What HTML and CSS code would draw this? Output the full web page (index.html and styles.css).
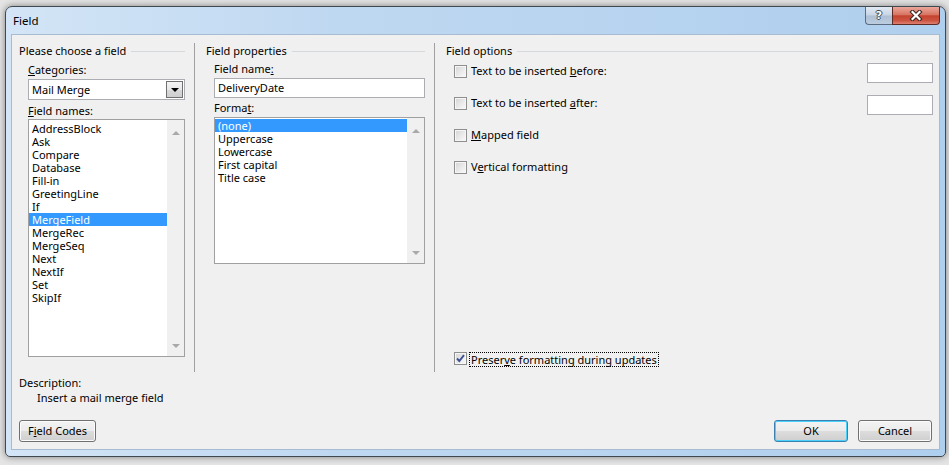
FILE: index.html
```html
<!DOCTYPE html>
<html lang="en">
<head>
<meta charset="utf-8">
<title>Field</title>
<link rel="stylesheet" href="styles.css">
</head>
<body>
<div class="desktop">
  <div class="window">
    <div class="titlebar">
      <span class="title">Field</span>
      <div class="caption">
        <div class="cap-btn help"><span>?</span></div>
        <div class="cap-btn close">
          <svg width="14" height="11" viewBox="0 0 14 11">
            <path d="M3.5 2 L10.5 9 M10.5 2 L3.5 9" stroke="#3a2622" stroke-width="4.2" stroke-linecap="square" fill="none"/>
            <path d="M3.5 2 L10.5 9 M10.5 2 L3.5 9" stroke="#ffffff" stroke-width="2.2" stroke-linecap="square" fill="none"/>
          </svg>
        </div>
      </div>
    </div>
    <div class="client">
      <div class="panels">
        <section class="panel p1">
          <div class="group-head"><span>Please choose a field</span></div>
          <div class="field-label"><u>C</u>ategories:</div>
          <div class="combo">
            <span class="combo-text">Mail Merge</span>
            <span class="drop"><i></i></span>
          </div>
          <div class="field-label"><u>F</u>ield names:</div>
          <div class="listbox lb-names">
            <ul class="items">
              <li>AddressBlock</li>
              <li>Ask</li>
              <li>Compare</li>
              <li>Database</li>
              <li>Fill-in</li>
              <li>GreetingLine</li>
              <li>If</li>
              <li class="sel">MergeField</li>
              <li>MergeRec</li>
              <li>MergeSeq</li>
              <li>Next</li>
              <li>NextIf</li>
              <li>Set</li>
              <li>SkipIf</li>
            </ul>
            <div class="vscroll"><i class="arr up"></i><i class="arr down"></i></div>
          </div>
        </section>
        <section class="panel p2">
          <div class="group-head"><span>Field properties</span></div>
          <div class="field-label">Field name<u>:</u></div>
          <div class="textbox wide">DeliveryDate</div>
          <div class="field-label">Forma<u>t</u>:</div>
          <div class="listbox lb-format">
            <ul class="items">
              <li class="sel">(none)</li>
              <li>Uppercase</li>
              <li>Lowercase</li>
              <li>First capital</li>
              <li>Title case</li>
            </ul>
            <div class="vscroll"><i class="arr up"></i><i class="arr down"></i></div>
          </div>
        </section>
        <section class="panel p3">
          <div class="group-head"><span>Field options</span></div>
          <div class="opt-rows">
            <div class="opt-row">
              <span class="check"></span>
              <span class="opt-label">Text to be inserted <u>b</u>efore:</span>
              <span class="textbox small"></span>
            </div>
            <div class="opt-row">
              <span class="check"></span>
              <span class="opt-label">Text to be inserted <u>a</u>fter:</span>
              <span class="textbox small"></span>
            </div>
            <div class="opt-row">
              <span class="check"></span>
              <span class="opt-label"><u>M</u>apped field</span>
            </div>
            <div class="opt-row">
              <span class="check"></span>
              <span class="opt-label">V<u>e</u>rtical formatting</span>
            </div>
          </div>
          <div class="opt-row preserve">
            <span class="check checked">
              <svg width="11" height="11" viewBox="0 0 11 11"><path d="M2 5.5 L4.3 8 L9 2.2" stroke="#3d4f95" stroke-width="1.9" fill="none"/></svg>
            </span>
            <span class="opt-label focus">Preser<u>v</u>e formatting during updates</span>
          </div>
        </section>
      </div>
      <div class="desc">
        <div>Description:</div>
        <div class="desc-text">Insert a mail merge field</div>
      </div>
      <div class="footer">
        <button class="btn codes">F<u>i</u>eld Codes</button>
        <button class="btn ok default">OK</button>
        <button class="btn cancel">Cancel</button>
      </div>
    </div>
  </div>
</div>
</body>
</html>
```

FILE: styles.css
```css
* { box-sizing: border-box; }
html, body { margin: 0; padding: 0; }
body {
  width: 949px;
  height: 465px;
  overflow: hidden;
  background: #e4e4e4;
  font-family: "Noto Sans", "Open Sans", "DejaVu Sans", sans-serif;
  font-size: 11px;
  color: #000;
}
u { text-decoration: underline; text-underline-offset: 1px; }

.desktop {
  height: 465px;
  padding: 6px 0 0 5px;
}

.window {
  width: 941px;
  height: 451px;
  border: 1px solid #404850;
  border-radius: 7px 7px 5px 5px;
  padding: 0 6px 7px 6px;
  background: linear-gradient(90deg, #d3e5f6 0%, #bfd8f1 35%, #afcfee 100%);
  box-shadow: 0 0 7px rgba(0, 0, 0, 0.45);
  display: flex;
  flex-direction: column;
}

/* title bar */
.titlebar {
  height: 28px;
  display: flex;
  align-items: flex-start;
}
.title {
  padding: 6px 0 0 1px;
  line-height: 15px;
  font-size: 11.5px;
}
.caption {
  margin-left: auto;
  margin-right: -1px;
  display: flex;
}
.cap-btn {
  height: 18px;
  display: flex;
  align-items: center;
  justify-content: center;
}
.cap-btn.help {
  width: 27px;
  border: 1px solid #5b6b80;
  border-top: none;
  border-right: none;
  border-radius: 0 0 0 4px;
  background: linear-gradient(#e2eaf4 0%, #c8d5e4 48%, #aebfd3 52%, #bccde0 100%);
}
.cap-btn.help span {
  font-family: "DejaVu Sans", sans-serif;
  font-weight: bold;
  font-size: 11px;
  line-height: 14px;
  color: #fff;
  text-shadow: 1px 0 0 #3e4a58, -1px 0 0 #3e4a58, 0 1px 0 #3e4a58, 0 -1px 0 #3e4a58;
}
.cap-btn.close {
  width: 48px;
  border: 1px solid #5e2a24;
  border-top: none;
  border-radius: 0 0 4px 0;
  background: linear-gradient(#eaa79b 0%, #d87563 45%, #c4432f 52%, #cc5542 80%, #de8172 100%);
}
.cap-btn.close svg { display: block; }

/* client area */
.client {
  width: 927px;
  height: 414px;
  background: #f0f0f0;
  box-shadow: 0 0 0 1px #a7bbd2;
  padding: 8px 0 7px 0;
  display: flex;
  flex-direction: column;
}

.panels {
  height: 329px;
  display: flex;
}
.panel {
  display: flex;
  flex-direction: column;
}
.p1 { width: 182px; padding: 0 9px 0 7px; }
.p2 { width: 240px; padding: 0 9px 0 11px; border-left: 1px solid #a0a0a0; }
.p3 { flex: 1; padding: 0 6px 5px 11px; border-left: 1px solid #a0a0a0; }

.group-head {
  height: 16px;
  line-height: 16px;
  display: flex;
  align-items: center;
  gap: 5px;
  white-space: nowrap;
}
.group-head::after {
  content: "";
  flex: 1;
  height: 1px;
  background: #d6d9dc;
}

.field-label {
  line-height: 15px;
  margin-left: 9px;
}
.p2 .field-label, .p2 .textbox, .p2 .listbox { margin-left: 8px; }
.p1 .field-label { margin-top: 3px; }
.p2 .field-label { margin-top: 2px; }
.p2 .field-label:first-of-type { margin-top: 3px; }

/* combo */
.combo {
  margin: 2px 0 0 9px;
  height: 21px;
  border: 1px solid #abadb3;
  background: #fff;
  display: flex;
  align-items: center;
  padding-left: 3px;
  line-height: 15px;
}
.combo-text { flex: 1; }
.drop {
  width: 17px;
  height: 17px;
  margin-right: 1px;
  border: 1px solid #707070;
  background: linear-gradient(#f4f4f4 0%, #e8e8e8 50%, #dadada 51%, #cfcfcf 100%);
  display: flex;
  align-items: center;
  justify-content: center;
}
.drop i {
  width: 0;
  height: 0;
  border-left: 4px solid transparent;
  border-right: 4px solid transparent;
  border-top: 4px solid #000;
  margin-top: 1px;
}

/* textbox */
.textbox {
  display: block;
  height: 20px;
  border: 1px solid #abadb3;
  background: #fff;
  line-height: 18px;
  padding-left: 3px;
}
.textbox.wide { margin-top: 2px; }
.textbox.small {
  width: 66px;
  margin-left: auto;
}

/* list boxes */
.listbox {
  border: 1px solid #a0a0a0;
  background: #fff;
  display: flex;
}
.lb-names { margin: 1px 0 0 9px; height: 238px; }
.lb-format { margin-top: 2px; height: 147px; }
.items {
  list-style: none;
  margin: 0;
  padding: 2px 0 0 0;
  flex: 1;
}
.lb-format .items { padding-top: 1px; }
.items li {
  height: 13px;
  line-height: 13px;
  padding-left: 3px;
  white-space: nowrap;
}
.items li.sel {
  background: #3399ff;
  color: #fff;
}
.vscroll {
  width: 17px;
  background: #f0f0f0;
  display: flex;
  flex-direction: column;
  justify-content: space-between;
  align-items: center;
  padding: 11px 0 8px 0;
}
.arr {
  width: 0;
  height: 0;
  border-left: 4px solid transparent;
  border-right: 4px solid transparent;
}
.arr.up { border-bottom: 4px solid #a9a9a9; }
.arr.down { border-top: 4px solid #a9a9a9; }

/* options */
.opt-rows {
  margin: 4px 0 0 8px;
  display: flex;
  flex-direction: column;
  gap: 12px;
}
.opt-row {
  height: 20px;
  display: flex;
  align-items: flex-start;
}
.opt-label {
  line-height: 15px;
  margin-left: 4px;
  white-space: nowrap;
}
.check {
  width: 13px;
  height: 13px;
  margin-top: 2px;
  border: 1px solid #8e8f8f;
  background: linear-gradient(135deg, #d4d4d4 0%, #ececec 60%, #fafafa 100%);
  box-shadow: inset 0 0 0 1px #f6f6f6;
  flex: none;
  display: flex;
  align-items: center;
  justify-content: center;
}
.check svg { display: block; }
.preserve {
  margin: auto 0 0 8px;
  height: 15px;
}
.preserve .check { margin-top: 0; }
.opt-label.focus {
  margin-left: 2px;
  border: 1px dotted #000;
  line-height: 13px;
  padding: 0 1px;
}

/* description */
.desc {
  margin-top: 3px;
  padding-left: 7px;
  line-height: 15px;
}
.desc-text { padding-left: 18px; }

/* footer */
.footer {
  margin-top: 15px;
  height: 22px;
  display: flex;
  gap: 10px;
  padding: 0 7px;
}
.btn {
  height: 22px;
  font-family: inherit;
  font-size: 11px;
  color: #000;
  border: 1px solid #707070;
  border-radius: 3px;
  background: linear-gradient(#f3f3f3 0%, #ebebeb 49%, #dddddd 50%, #cfcfcf 100%);
  box-shadow: inset 0 0 0 1px #fbfbfb;
  padding: 0;
  line-height: 18px;
}
.btn.codes { width: 77px; }
.btn.ok { width: 74px; margin-left: auto; }
.btn.cancel { width: 74px; }
.btn.default {
  border-color: #3c7fb1;
  box-shadow: inset 0 0 0 1px #48d1fb;
}
```
